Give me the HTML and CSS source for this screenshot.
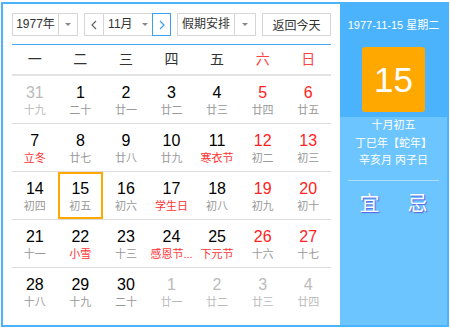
FILE: index.html
```html
<!DOCTYPE html>
<html>
    <head>
        <meta charset="utf-8">
        <title>万年历</title>
        <link rel="stylesheet" href="styles.css">
    </head>
    <body>
        <div class="calendar">
            <div class="main">
                <div class="toolbar">
                    <div class="select year">
                        <span class="label">1977年</span>
                        <span class="arrow"><i class="triangle"></i></span>
                    </div>
                    <div class="select month">
                        <span class="nav prev">
                            <svg width="6" height="10" viewBox="0 0 6 10"><polyline points="5,1 1,5 5,9" fill="none" stroke="#666" stroke-width="1.2"/></svg>
                        </span>
                        <span class="label">11月 <i class="triangle"></i></span>
                        <span class="nav next">
                            <svg width="6" height="10" viewBox="0 0 6 10"><polyline points="1,1 5,5 1,9" fill="none" stroke="#3a9ff0" stroke-width="1.2"/></svg>
                        </span>
                    </div>
                    <div class="select holiday">
                        <span class="label">假期安排</span>
                        <span class="arrow"><i class="triangle"></i></span>
                    </div>
                    <button class="today">返回今天</button>
                </div>

                <div class="week">
                    <span>一</span><span>二</span><span>三</span><span>四</span><span>五</span>
                    <span class="weekend">六</span><span class="weekend">日</span>
                </div>

                <div class="days">
                    <div class="day other"><b>31</b><em>十九</em></div>
                    <div class="day"><b>1</b><em>二十</em></div>
                    <div class="day"><b>2</b><em>廿一</em></div>
                    <div class="day"><b>3</b><em>廿二</em></div>
                    <div class="day"><b>4</b><em>廿三</em></div>
                    <div class="day weekend"><b>5</b><em>廿四</em></div>
                    <div class="day weekend"><b>6</b><em>廿五</em></div>

                    <div class="day"><b>7</b><em class="fest">立冬</em></div>
                    <div class="day"><b>8</b><em>廿七</em></div>
                    <div class="day"><b>9</b><em>廿八</em></div>
                    <div class="day"><b>10</b><em>廿九</em></div>
                    <div class="day"><b>11</b><em class="fest">寒衣节</em></div>
                    <div class="day weekend"><b>12</b><em>初二</em></div>
                    <div class="day weekend"><b>13</b><em>初三</em></div>

                    <div class="day"><b>14</b><em>初四</em></div>
                    <div class="day selected"><b>15</b><em>初五</em></div>
                    <div class="day"><b>16</b><em>初六</em></div>
                    <div class="day"><b>17</b><em class="fest">学生日</em></div>
                    <div class="day"><b>18</b><em>初八</em></div>
                    <div class="day weekend"><b>19</b><em>初九</em></div>
                    <div class="day weekend"><b>20</b><em>初十</em></div>

                    <div class="day"><b>21</b><em>十一</em></div>
                    <div class="day"><b>22</b><em class="fest">小雪</em></div>
                    <div class="day"><b>23</b><em>十三</em></div>
                    <div class="day"><b>24</b><em class="fest">感恩节...</em></div>
                    <div class="day"><b>25</b><em class="fest">下元节</em></div>
                    <div class="day weekend"><b>26</b><em>十六</em></div>
                    <div class="day weekend"><b>27</b><em>十七</em></div>

                    <div class="day"><b>28</b><em>十八</em></div>
                    <div class="day"><b>29</b><em>十九</em></div>
                    <div class="day"><b>30</b><em>二十</em></div>
                    <div class="day other"><b>1</b><em>廿一</em></div>
                    <div class="day other"><b>2</b><em>廿二</em></div>
                    <div class="day other"><b>3</b><em>廿三</em></div>
                    <div class="day other"><b>4</b><em>廿四</em></div>
                </div>
            </div>

            <div class="side">
                <div class="side-top">
                    <p class="date">1977-11-15 星期二</p>
                    <div class="big-day">15</div>
                </div>
                <div class="side-bottom">
                    <p>十月初五</p>
                    <p>丁巳年【蛇年】</p>
                    <p>辛亥月 丙子日</p>
                    <hr>
                    <div class="yiji"><span>宜</span><span>忌</span></div>
                </div>
            </div>
        </div>
    </body>
</html>
```

FILE: styles.css
```css
* {
    padding: 0;
    margin: 0;
    box-sizing: border-box;
}

body {
    font-family: "Liberation Sans", "Noto Sans CJK SC", sans-serif;
    font-size: 12px;
    color: #333;
    background-color: #fff;
}

.calendar {
    display: flex;
    width: 448px;
    height: 325px;
    margin: 2px 0 0 1px;
    border: 2px solid #4ab3fb;
}

.main {
    width: 337px;
    padding: 9px 0 0 9px;
}

/* toolbar */

.toolbar {
    display: flex;
    gap: 6px;
    width: 319px;
    height: 23px;
}

.select {
    display: flex;
    height: 23px;
    border: 1px solid #d6d6d6;
}

.select .label {
    flex: 1;
    text-align: center;
    line-height: 21px;
}

.select .arrow {
    width: 19px;
    display: flex;
    align-items: center;
    justify-content: center;
    border-left: 1px solid #d6d6d6;
}

.triangle {
    display: inline-block;
    vertical-align: middle;
    border-left: 3px solid transparent;
    border-right: 3px solid transparent;
    border-top: 3px solid #888;
}

.year {
    width: 66px;
}

.month {
    width: 87px;
}

.month .label i {
    margin-left: 6px;
}

.nav {
    width: 19px;
    display: flex;
    align-items: center;
    justify-content: center;
}

.prev {
    border-right: 1px solid #d6d6d6;
}

.next {
    margin: -1px -1px -1px 0;
    width: 19px;
    border: 1px solid #3a9ff0;
}

.holiday {
    width: 79px;
}

.holiday .arrow {
    width: 21px;
}

.today {
    width: 69px;
    height: 23px;
    border: 1px solid #d6d6d6;
    background-color: #fff;
    font-family: inherit;
    font-size: 12px;
    color: #333;
}

/* grid */

.week {
    display: grid;
    grid-template-columns: repeat(7, 1fr);
    width: 319px;
    margin-top: 8px;
    border-top: 1px solid #4aa8ee;
    border-bottom: 2px solid #e3e3e3;
    line-height: 29px;
    font-size: 14px;
    text-align: center;
}

.week .weekend {
    color: #f44;
}

.days {
    display: grid;
    grid-template-columns: repeat(7, 1fr);
    width: 319px;
}

.day {
    height: 48px;
    padding-top: 7px;
    text-align: center;
    border-bottom: 1px solid #dcdcdc;
}

.day:nth-last-child(-n+7) {
    border-bottom: none;
}

.day b {
    display: block;
    font-weight: normal;
    font-size: 16px;
    line-height: 20px;
    color: #000;
}

.day em {
    display: block;
    font-style: normal;
    font-size: 11px;
    line-height: 14px;
    color: #999;
    white-space: nowrap;
}

.day.weekend b {
    color: #f22;
}

.day em.fest {
    color: #f33;
}

.day.other b,
.day.other em {
    color: #bbb;
}

.day.selected {
    box-shadow: inset 0 0 0 2px #ffa800;
}

/* side panel */

.side {
    flex: 1;
    display: flex;
    flex-direction: column;
    color: #fff;
    font-size: 11px;
    text-align: center;
}

.side-top {
    height: 113px;
    padding-top: 13px;
    background-color: #4ab3fb;
}

.date {
    line-height: 16px;
}

.big-day {
    width: 63px;
    height: 65px;
    margin: 14px auto 0;
    border-radius: 3px;
    background-color: #ffa800;
    font-size: 35px;
    line-height: 65px;
}

.side-bottom {
    flex: 1;
    background-color: #6cc5fe;
}

.side-bottom p {
    line-height: 17.5px;
}

.side-bottom hr {
    margin: 10px 8px 0;
    border: none;
    border-top: 1px solid rgba(255, 255, 255, 0.45);
}

.yiji {
    display: flex;
    justify-content: center;
    gap: 28px;
    margin-top: 11px;
    font-size: 20px;
    line-height: 24px;
    text-shadow: 1px 1px 1px #5b5be0;
}
```
